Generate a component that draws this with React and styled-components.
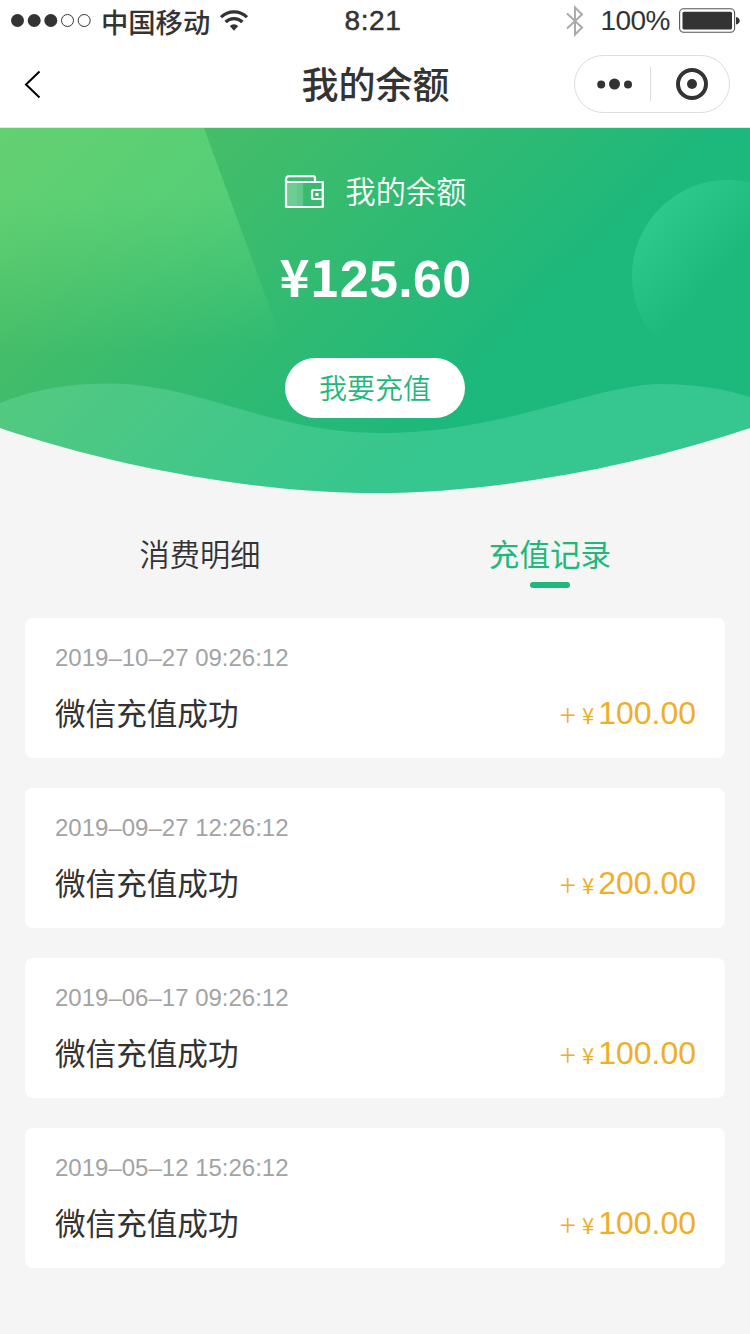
import React, { useState } from 'react';
import styled, { createGlobalStyle } from 'styled-components';

const GlobalStyle = createGlobalStyle`
    * {
        box-sizing: border-box;
    }
    body {
        margin: 0;
        background-color: #f5f5f5;
        font-family: "Liberation Sans", "Noto Sans CJK SC", sans-serif;
        color: #333;
    }
`;

const Page = styled.div`
    width: 750px;
    height: 1334px;
    display: flex;
    flex-direction: column;
    overflow: hidden;
    background-color: #f5f5f5;
`;

const Header = styled.header`
    height: 128px;
    background-color: #fff;
    border-bottom: 1px solid #e6e6e6;
`;

const StatusBar = styled.div`
    height: 41px;
    padding: 0 10px 0 11px;
    display: grid;
    grid-template-columns: 1fr auto 1fr;
    align-items: center;
`;

const StatusGroup = styled.div`
    display: flex;
    align-items: center;
    justify-content: ${({ $end }) => ($end ? 'flex-end' : 'flex-start')};
`;

const Carrier = styled.span`
    margin: 0 10px;
    font: 500 27.3px/40px "Noto Sans CJK SC", sans-serif;
`;

const Clock = styled.span`
    margin-right: 5px;
    font-size: 28px;
    line-height: 41px;
    letter-spacing: 0.6px;
    -webkit-text-stroke: 0.5px #333;
`;

const Percent = styled.span`
    margin: 0 9px 0 16px;
    font-size: 28px;
    line-height: 41px;
    letter-spacing: -0.5px;
`;

const NavBar = styled.div`
    height: 86px;
    padding: 0 20px 0 23px;
    display: grid;
    grid-template-columns: 1fr auto 1fr;
    align-items: center;
`;

const BackButton = styled.button`
    width: 30px;
    height: 40px;
    padding: 0;
    border: none;
    background: none;
    display: flex;
    align-items: center;
`;

const Title = styled.h1`
    margin: 0 2px 2px 0;
    font: 500 37px/54px "Noto Sans CJK SC", sans-serif;
`;

const Capsule = styled.div`
    width: 156px;
    height: 58px;
    justify-self: end;
    display: flex;
    align-items: center;
    border: 1px solid #ddd;
    border-radius: 29px;
`;

const CapsuleButton = styled.div`
    width: ${({ $width }) => $width};
    display: flex;
    align-items: center;
    justify-content: center;
    padding-left: 4px;
`;

const CapsuleDivider = styled.div`
    width: 1px;
    height: 34px;
    background-color: #ddd;
`;

const Hero = styled.section`
    height: 366px;
    flex-shrink: 0;
    position: relative;
`;

const HeroBackground = styled.svg`
    position: absolute;
    top: 0;
    left: 0;
`;

const HeroContent = styled.div`
    position: relative;
    padding-top: 41px;
    display: flex;
    flex-direction: column;
    align-items: center;
    color: #fff;
`;

const HeroTitle = styled.div`
    height: 44px;
    display: flex;
    align-items: center;
    gap: 22px;
    font: 350 30.2px/42px "Noto Sans CJK SC", sans-serif;

    svg {
        margin-top: 2px;
    }

    span {
        margin-bottom: 2px;
    }
`;

const Balance = styled.div`
    margin-top: 36px;
    padding-left: 1px;
    height: 60px;
    font-size: 52px;
    font-weight: bold;
    line-height: 60px;
    letter-spacing: 0.3px;
    white-space: nowrap;
`;

const BalanceLead = styled.span`
    font-family: "Noto Sans CJK SC", sans-serif;
    font-size: 51px;
    line-height: 0;
    letter-spacing: 0;
`;

const RechargeButton = styled.button`
    width: 180px;
    height: 60px;
    margin-top: 49px;
    padding: 0 0 2px;
    border: none;
    border-radius: 30px;
    background-color: #fff;
    color: #1fb87c;
    font: 350 28px/58px "Noto Sans CJK SC", sans-serif;
`;

const Tabs = styled.nav`
    height: 124px;
    flex-shrink: 0;
    padding: 37px 25px 0;
    display: grid;
    grid-template-columns: 1fr 1fr;
`;

const Tab = styled.button`
    height: 57px;
    padding: 0;
    border: none;
    background: none;
    display: flex;
    flex-direction: column;
    align-items: center;
    justify-content: space-between;
    color: ${({ $active }) => ($active ? '#1fb87c' : '#333')};
    font: ${({ $active }) => ($active ? '400 30.6px/44px' : '350 30.2px/44px')} "Noto Sans CJK SC", sans-serif;
`;

const TabLine = styled.span`
    width: 40px;
    height: 6px;
    border-radius: 3px;
    background-color: #1fb87c;
`;

const Records = styled.main`
    padding: 0 25px;
    display: flex;
    flex-direction: column;
    gap: 30px;
`;

const Record = styled.article`
    height: 140px;
    padding: 24px 29px 0 30px;
    border-radius: 8px;
    background-color: #fff;
`;

const RecordTime = styled.div`
    color: #a3a3a3;
    font-size: 24px;
    line-height: 32px;
`;

const RecordRow = styled.div`
    margin-top: 15px;
    display: flex;
    align-items: center;
    justify-content: space-between;
`;

const RecordName = styled.div`
    font: 400 30.6px/44px "Noto Sans CJK SC", sans-serif;
`;

const Amount = styled.div`
    padding-top: 2px;
    color: #f0ae26;
    font-size: 32px;
    line-height: 44px;
    white-space: nowrap;
`;

const Plus = styled.span`
    margin-right: 6px;
    font: 300 30px/0 "Noto Sans CJK SC", sans-serif;
    vertical-align: -2px;
`;

const Yen = styled.span`
    margin-right: 4px;
    font: 400 22px/0 "Noto Sans CJK SC", sans-serif;
`;

const records = [
    { time: '2019–10–27 09:26:12', name: '微信充值成功', amount: '100.00' },
    { time: '2019–09–27 12:26:12', name: '微信充值成功', amount: '200.00' },
    { time: '2019–06–17 09:26:12', name: '微信充值成功', amount: '100.00' },
    { time: '2019–05–12 15:26:12', name: '微信充值成功', amount: '100.00' },
];

const tabs = ['消费明细', '充值记录'];

const Signal = () => (
    <svg width="80" height="14" viewBox="0 0 80 14">
        {[6.5, 23.2, 39.8].map((cx) => <circle key={cx} cx={cx} cy="6.5" r="6.5" fill="#333" />)}
        {[56.5, 73.2].map((cx) => <circle key={cx} cx={cx} cy="6.5" r="6" fill="none" stroke="#333" />)}
    </svg>
);

const Wifi = () => (
    <svg width="28" height="22" viewBox="0 0 28 22" fill="none" stroke="#333" strokeWidth="3.2">
        <path d="M1 7.2a18.6 18.6 0 0 1 26 0" />
        <path d="M5.6 12a12 12 0 0 1 16.8 0" />
        <path d="M9.8 16a6.2 6.2 0 0 1 8.4 0L14 20.8Z" fill="#333" stroke="none" />
    </svg>
);

const Bluetooth = () => (
    <svg width="18" height="32" viewBox="0 0 18 32" fill="none" stroke="#aaa" strokeWidth="2">
        <path d="M1 8.5 16 22.5 9 29.5V2.5L16 9.5 1 23.5" />
    </svg>
);

const Battery = () => (
    <svg width="61" height="26" viewBox="0 0 61 26">
        <rect x="0.6" y="0.8" width="55" height="23.5" rx="4" fill="none" stroke="#555" strokeWidth="1.1" />
        <rect x="3.5" y="3.7" width="49.5" height="17.7" rx="1.5" fill="#333" />
        <path d="M57 9c5 1 5 6.5 0 7.5Z" fill="#333" />
    </svg>
);

const Wallet = () => (
    <svg width="40" height="34" viewBox="0 0 40 34" fill="none" stroke="#fff" strokeWidth="2.2">
        <path d="M2 8h11v24H2Z" fill="#fff" fillOpacity="0.26" stroke="none" />
        <path d="M13 8h6v24h-6Z" fill="#fff" fillOpacity="0.2" stroke="none" />
        <path d="M2 7V4.5Q2 1.2 5.5 1.2H29Q31 1.2 31 3V7" />
        <path d="M2 5V32H38.8V7H2" strokeLinejoin="round" />
        <path d="M38.8 15H29.5Q28 15 28 16.5V22.5Q28 24 29.5 24H38.8" />
        <path d="M31.500 18h3v3h-3Z" fill="#fff" stroke="none" />
    </svg>
);

const HeroArt = () => (
    <HeroBackground width="750" height="366" viewBox="0 0 750 366">
        <defs>
            <linearGradient id="base" gradientUnits="userSpaceOnUse" x1="0" y1="0" x2="370" y2="370">
                <stop offset="0" stopColor="#56bf60" />
                <stop offset="1" stopColor="#1cb87c" />
            </linearGradient>
            <linearGradient id="beam" gradientUnits="userSpaceOnUse" x1="100" y1="70" x2="108" y2="225">
                <stop offset="0" stopColor="#76e888" stopOpacity="0.42" />
                <stop offset="1" stopColor="#76e888" stopOpacity="0" />
            </linearGradient>
            <linearGradient id="bubble" gradientUnits="userSpaceOnUse" x1="656" y1="83" x2="722" y2="143">
                <stop offset="0" stopColor="#40dca0" stopOpacity="0.45" />
                <stop offset="1" stopColor="#40dca0" stopOpacity="0" />
            </linearGradient>
            <clipPath id="bowl">
                <path d="M0 0H750V300C625 342 485 365 375 365S125 342 0 300Z" />
            </clipPath>
        </defs>
        <g clipPath="url(#bowl)">
            <rect width="750" height="366" fill="url(#base)" />
            <path d="M0 0H204L290 235H0Z" fill="url(#beam)" />
            <circle cx="728" cy="148" r="96" fill="url(#bubble)" />
            <path
                d="M0 275C35 261 70 255.5 108 255.5C200 255.5 270 305 380 305C505 305 595 256 662 256C695 256 725 261 750 269V366H0Z"
                fill="#9effdb"
                fillOpacity="0.2"
            />
        </g>
    </HeroBackground>
);

const App = () => {
    const [activeTab, setActiveTab] = useState(1);

    return (
        <Page>
            <GlobalStyle />
            <Header>
                <StatusBar>
                    <StatusGroup>
                        <Signal />
                        <Carrier>中国移动</Carrier>
                        <Wifi />
                    </StatusGroup>
                    <Clock>8:21</Clock>
                    <StatusGroup $end>
                        <Bluetooth />
                        <Percent>100%</Percent>
                        <Battery />
                    </StatusGroup>
                </StatusBar>
                <NavBar>
                    <BackButton>
                        <svg width="18" height="28" viewBox="0 0 18 28" fill="none" stroke="#000" strokeWidth="2">
                            <path d="M16.5 1.5 3 14.5 16.5 27.5" />
                        </svg>
                    </BackButton>
                    <Title>我的余额</Title>
                    <Capsule>
                        <CapsuleButton $width="75px">
                            <svg width="36" height="12" viewBox="0 0 36 12" fill="#333">
                                <circle cx="4.2" cy="6.5" r="4" />
                                <circle cx="17.5" cy="6" r="5.5" />
                                <circle cx="31" cy="6.5" r="4" />
                            </svg>
                        </CapsuleButton>
                        <CapsuleDivider />
                        <CapsuleButton $width="78px">
                            <svg width="32" height="32" viewBox="0 0 32 32">
                                <circle cx="16" cy="16" r="14" fill="none" stroke="#333" strokeWidth="4" />
                                <circle cx="16" cy="16" r="5" fill="#333" />
                            </svg>
                        </CapsuleButton>
                    </Capsule>
                </NavBar>
            </Header>
            <Hero>
                <HeroArt />
                <HeroContent>
                    <HeroTitle>
                        <Wallet />
                        <span>我的余额</span>
                    </HeroTitle>
                    <Balance><BalanceLead>¥1</BalanceLead>25.60</Balance>
                    <RechargeButton>我要充值</RechargeButton>
                </HeroContent>
            </Hero>
            <Tabs>
                {tabs.map((label, i) => (
                    <Tab key={label} $active={i === activeTab} onClick={() => setActiveTab(i)}>
                        {label}
                        {i === activeTab && <TabLine />}
                    </Tab>
                ))}
            </Tabs>
            <Records>
                {records.map(({ time, name, amount }) => (
                    <Record key={time}>
                        <RecordTime>{time}</RecordTime>
                        <RecordRow>
                            <RecordName>{name}</RecordName>
                            <Amount>
                                <Plus>+</Plus>
                                <Yen>¥</Yen>
                                {amount}
                            </Amount>
                        </RecordRow>
                    </Record>
                ))}
            </Records>
        </Page>
    );
};

export default App;
